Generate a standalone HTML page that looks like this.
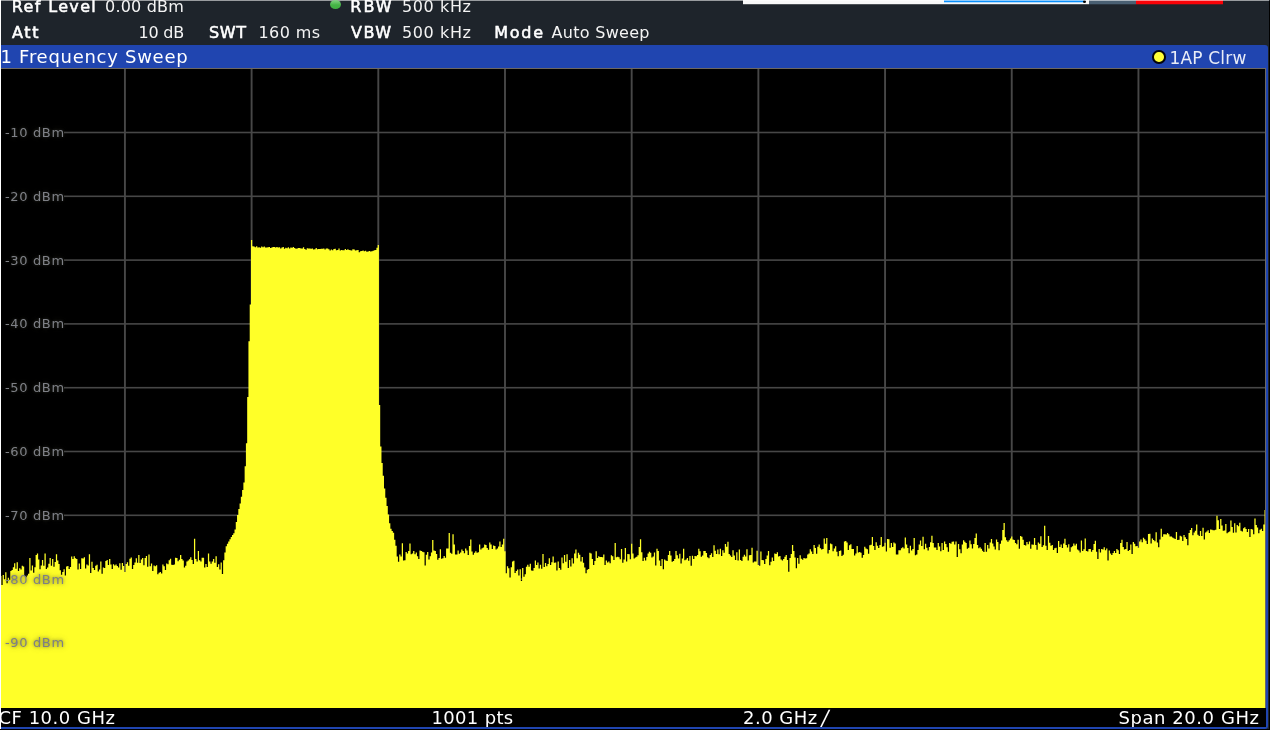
<!DOCTYPE html>
<html lang="en">
<head>
<meta charset="utf-8">
<title>Spectrum Analyzer - Frequency Sweep</title>
<style>
html,body{margin:0;padding:0;}
body{width:1272px;height:731px;overflow:hidden;position:relative;background:#1e242b;
 font-family:"DejaVu Sans","Liberation Sans",sans-serif;color:#fff;}
.abs{position:absolute;}
.ly{will-change:transform;}
.t{position:absolute;white-space:nowrap;line-height:20px;height:20px;font-size:16px;color:#f4f4f4;}
.b{font-weight:normal;color:#fff;-webkit-text-stroke:.55px #fff;}
.hdr{left:0;top:0;width:1272px;height:45px;background:#1e242b;overflow:hidden;}
.title{left:1px;top:45px;width:1267px;height:23px;background:#2045b0;border-top-right-radius:3px;}
.frame{left:1px;top:68px;width:1267px;height:661px;background:#2045b0;border-bottom-right-radius:3px;}
.plot{left:0;top:68px;width:1266px;height:640px;background:#000;overflow:hidden;}
.foot{left:1px;top:708px;width:1265px;height:19px;background:#000;overflow:hidden;}
.ft{position:absolute;top:0;white-space:nowrap;font-size:18px;line-height:19px;color:#fff;}
.yl{position:absolute;left:5px;font-size:13px;line-height:18px;height:18px;color:#7e8086;white-space:nowrap;
 letter-spacing:.65px;text-shadow:0 0 3px rgba(70,70,60,.55),0 0 6px rgba(70,70,60,.45);}
</style>
</head>
<body>
<!-- header / channel bar -->
<div class="abs hdr ly">
  <div class="abs" style="left:743px;top:0;width:346px;height:4px;background:#f8f8f8"></div>
  <div class="abs" style="left:743px;top:4px;width:346px;height:1px;background:#4d5257"></div>
  <div class="abs" style="left:944px;top:0;width:140px;height:2px;background:#0a8ffb"></div>
  <div class="abs" style="left:944px;top:2px;width:140px;height:1px;background:#b4dcfd"></div>
  <div class="abs" style="left:1083px;top:.4px;width:3px;height:3px;border-radius:50%;background:#000"></div>
  <div class="abs" style="left:1089px;top:0;width:47px;height:4px;background:#4a6073"></div>
  <div class="abs" style="left:1089px;top:4px;width:47px;height:1px;background:#2a3540"></div>
  <div class="abs" style="left:1136px;top:0;width:87px;height:4px;background:#fb0207"></div>
  <div class="abs" style="left:1136px;top:4px;width:87px;height:1px;background:#5a1c22"></div>
  <div class="abs" style="left:0;top:0;width:1269px;height:1px;background:rgba(255,255,255,.55)"></div>
  <div class="abs" style="left:330px;top:0;width:11px;height:9px;border-radius:50%;background:linear-gradient(#86d486,#45b446 55%,#3fae40)"></div>

  <div class="t b" id="t1" style="left:11.8px;top:-3.5px;letter-spacing:1.35px">Ref Level</div>
  <div class="t" id="t2" style="left:105px;top:-3.5px;letter-spacing:.2px">0.00 dBm</div>
  <div class="t b" id="t3" style="left:350.3px;top:-3.5px;letter-spacing:2px">RBW</div>
  <div class="t" id="t4" style="left:402px;top:-3.5px;letter-spacing:.6px">500 kHz</div>

  <div class="t b" id="t5" style="left:12px;top:23px;letter-spacing:1.65px">Att</div>
  <div class="t" id="t6" style="left:138.5px;top:23px;letter-spacing:-.2px">10 dB</div>
  <div class="t b" id="t7" style="left:209px;top:23px;letter-spacing:.65px">SWT</div>
  <div class="t" id="t8" style="left:258.5px;top:23px;letter-spacing:.4px">160 ms</div>
  <div class="t b" id="t9" style="left:351px;top:23px;letter-spacing:1.45px">VBW</div>
  <div class="t" id="t10" style="left:402px;top:23px;letter-spacing:.6px">500 kHz</div>
  <div class="t b" id="t11" style="left:494.3px;top:23px;letter-spacing:1.7px">Mode</div>
  <div class="t" id="t12" style="left:551.5px;top:23px;letter-spacing:.3px">Auto Sweep</div>
</div>

<!-- window title bar -->
<div class="abs title ly">
  <div class="t" id="tt" style="left:-.5px;top:1px;font-size:18px;line-height:22px;height:22px;color:#fff;letter-spacing:.72px">1 Frequency Sweep</div>
  <div class="abs" style="left:1151.4px;top:5.4px;width:9.6px;height:9.6px;border-radius:50%;background:#ffff38;border:2px solid #05050c"></div>
  <div class="t" id="tr" style="left:1168.5px;top:1.5px;font-size:17px;line-height:22px;height:22px;color:#e9edf7;letter-spacing:.18px">1AP Clrw</div>
</div>

<!-- diagram frame -->
<div class="abs frame"></div>
<div class="abs plot">
<svg class="abs" style="left:0;top:-68px" width="1266" height="731" viewBox="0 0 1266 731">
  <g fill="#474747"><rect x="123.97" y="68" width="1.9" height="640"/><rect x="250.66" y="68" width="1.9" height="640"/><rect x="377.35" y="68" width="1.9" height="640"/><rect x="504.04" y="68" width="1.9" height="640"/><rect x="630.73" y="68" width="1.9" height="640"/><rect x="757.42" y="68" width="1.9" height="640"/><rect x="884.11" y="68" width="1.9" height="640"/><rect x="1010.80" y="68" width="1.9" height="640"/><rect x="1137.49" y="68" width="1.9" height="640"/><rect x="64" y="131.70" width="1201" height="1.6"/><rect x="64" y="195.50" width="1201" height="1.6"/><rect x="64" y="259.30" width="1201" height="1.6"/><rect x="64" y="323.10" width="1201" height="1.6"/><rect x="64" y="386.90" width="1201" height="1.6"/><rect x="64" y="450.70" width="1201" height="1.6"/><rect x="64" y="514.50" width="1201" height="1.6"/><rect x="64" y="578.30" width="1201" height="1.6"/><rect x="64" y="642.10" width="1201" height="1.6"/></g>
  <path fill="#ffff28" d="M-1.8,708L-2.40,572.8L-1.14,572.8L-1.14,585.3L0.13,585.3L0.13,576.1L1.40,576.1L1.40,585.1L2.66,585.1L2.66,575.0L3.93,575.0L3.93,579.3L5.20,579.3L5.20,572.3L6.46,572.3L6.46,583.3L7.73,583.3L7.73,577.7L9.00,577.7L9.00,579.7L10.27,579.7L10.27,571.1L11.53,571.1L11.53,570.0L12.80,570.0L12.80,567.2L14.07,567.2L14.07,563.2L15.33,563.2L15.33,568.7L16.60,568.7L16.60,562.3L17.87,562.3L17.87,570.9L19.13,570.9L19.13,568.3L20.40,568.3L20.40,569.5L21.67,569.5L21.67,565.8L22.93,565.8L22.93,566.5L24.20,566.5L24.20,575.9L25.47,575.9L25.47,577.2L26.74,577.2L26.74,575.4L28.00,575.4L28.00,573.8L29.27,573.8L29.27,558.1L30.54,558.1L30.54,570.4L31.80,570.4L31.80,565.4L33.07,565.4L33.07,572.8L34.34,572.8L34.34,567.2L35.60,567.2L35.60,555.0L36.87,555.0L36.87,553.4L38.14,553.4L38.14,559.5L39.40,559.5L39.40,569.2L40.67,569.2L40.67,565.5L41.94,565.5L41.94,559.9L43.20,559.9L43.20,565.7L44.47,565.7L44.47,553.4L45.74,553.4L45.74,569.1L47.01,569.1L47.01,567.4L48.27,567.4L48.27,563.8L49.54,563.8L49.54,558.0L50.81,558.0L50.81,565.8L52.07,565.8L52.07,559.1L53.34,559.1L53.34,566.8L54.61,566.8L54.61,562.0L55.87,562.0L55.87,554.3L57.14,554.3L57.14,560.4L58.41,560.4L58.41,564.1L59.67,564.1L59.67,570.3L60.94,570.3L60.94,574.8L62.21,574.8L62.21,571.9L63.48,571.9L63.48,569.2L64.74,569.2L64.74,575.6L66.01,575.6L66.01,566.4L67.28,566.4L67.28,566.1L68.54,566.1L68.54,568.9L69.81,568.9L69.81,567.1L71.08,567.1L71.08,556.4L72.34,556.4L72.34,558.9L73.61,558.9L73.61,556.3L74.88,556.3L74.88,558.3L76.14,558.3L76.14,559.1L77.41,559.1L77.41,569.5L78.68,569.5L78.68,563.6L79.95,563.6L79.95,569.0L81.21,569.0L81.21,558.2L82.48,558.2L82.48,558.4L83.75,558.4L83.75,557.2L85.01,557.2L85.01,568.6L86.28,568.6L86.28,564.4L87.55,564.4L87.55,565.5L88.81,565.5L88.81,554.2L90.08,554.2L90.08,572.9L91.35,572.9L91.35,561.8L92.61,561.8L92.61,567.9L93.88,567.9L93.88,570.1L95.15,570.1L95.15,565.8L96.41,565.8L96.41,564.7L97.68,564.7L97.68,571.6L98.95,571.6L98.95,569.5L100.22,569.5L100.22,561.6L101.48,561.6L101.48,573.7L102.75,573.7L102.75,567.6L104.02,567.6L104.02,567.9L105.28,567.9L105.28,561.1L106.55,561.1L106.55,560.0L107.82,560.0L107.82,564.9L109.08,564.9L109.08,559.0L110.35,559.0L110.35,564.5L111.62,564.5L111.62,569.0L112.88,569.0L112.88,564.3L114.15,564.3L114.15,565.4L115.42,565.4L115.42,564.5L116.69,564.5L116.69,566.0L117.95,566.0L117.95,567.6L119.22,567.6L119.22,563.2L120.49,563.2L120.49,569.7L121.75,569.7L121.75,562.9L123.02,562.9L123.02,566.1L124.29,566.1L124.29,572.0L125.55,572.0L125.55,564.1L126.82,564.1L126.82,562.3L128.09,562.3L128.09,565.7L129.35,565.7L129.35,558.8L130.62,558.8L130.62,557.6L131.89,557.6L131.89,568.9L133.15,568.9L133.15,565.0L134.42,565.0L134.42,562.4L135.69,562.4L135.69,558.3L136.96,558.3L136.96,562.7L138.22,562.7L138.22,555.1L139.49,555.1L139.49,562.9L140.76,562.9L140.76,559.4L142.02,559.4L142.02,558.0L143.29,558.0L143.29,565.3L144.56,565.3L144.56,558.1L145.82,558.1L145.82,555.9L147.09,555.9L147.09,566.7L148.36,566.7L148.36,554.4L149.62,554.4L149.62,566.3L150.89,566.3L150.89,563.5L152.16,563.5L152.16,570.9L153.43,570.9L153.43,565.6L154.69,565.6L154.69,566.2L155.96,566.2L155.96,565.2L157.23,565.2L157.23,574.3L158.49,574.3L158.49,572.8L159.76,572.8L159.76,572.0L161.03,572.0L161.03,573.4L162.29,573.4L162.29,564.5L163.56,564.5L163.56,566.3L164.83,566.3L164.83,569.9L166.09,569.9L166.09,563.6L167.36,563.6L167.36,564.2L168.63,564.2L168.63,560.2L169.89,560.2L169.89,558.7L171.16,558.7L171.16,564.8L172.43,564.8L172.43,564.9L173.70,564.9L173.70,564.4L174.96,564.4L174.96,557.7L176.23,557.7L176.23,558.0L177.50,558.0L177.50,561.3L178.76,561.3L178.76,559.7L180.03,559.7L180.03,555.0L181.30,555.0L181.30,559.1L182.56,559.1L182.56,560.5L183.83,560.5L183.83,567.6L185.10,567.6L185.10,565.8L186.36,565.8L186.36,561.4L187.63,561.4L187.63,560.4L188.90,560.4L188.90,559.2L190.17,559.2L190.17,557.3L191.43,557.3L191.43,560.1L192.70,560.1L192.70,564.0L193.97,564.0L193.97,538.8L195.23,538.8L195.23,558.9L196.50,558.9L196.50,561.5L197.77,561.5L197.77,550.9L199.03,550.9L199.03,560.3L200.30,560.3L200.30,561.6L201.57,561.6L201.57,557.8L202.83,557.8L202.83,557.8L204.10,557.8L204.10,567.4L205.37,567.4L205.37,564.1L206.64,564.1L206.64,567.1L207.90,567.1L207.90,553.5L209.17,553.5L209.17,561.4L210.44,561.4L210.44,563.8L211.70,563.8L211.70,561.4L212.97,561.4L212.97,559.0L214.24,559.0L214.24,562.7L215.50,562.7L215.50,556.2L216.77,556.2L216.77,567.0L218.04,567.0L218.04,564.3L219.30,564.3L219.30,569.4L220.57,569.4L220.57,562.4L221.84,562.4L221.84,573.9L223.10,573.9L223.10,560.3L224.37,560.3L224.37,552.5L225.64,552.5L225.64,546.3L226.91,546.3L226.91,543.8L228.17,543.8L228.17,541.4L229.44,541.4L229.44,539.2L230.71,539.2L230.71,537.1L231.97,537.1L231.97,535.1L233.24,535.1L233.24,533.2L234.51,533.2L234.51,529.4L235.77,529.4L235.77,521.9L237.04,521.9L237.04,514.9L238.31,514.9L238.31,509.1L239.57,509.1L239.57,503.4L240.84,503.4L240.84,496.7L242.11,496.7L242.11,490.0L243.38,490.0L243.38,482.4L244.64,482.4L244.64,466.2L245.91,466.2L245.91,443.2L247.18,443.2L247.18,397.1L248.44,397.1L248.44,341.2L249.71,341.2L249.71,304.6L250.98,304.6L250.98,240.0L252.24,240.0L252.24,246.3L253.51,246.3L253.51,246.4L254.78,246.4L254.78,247.2L256.04,247.2L256.04,246.2L257.31,246.2L257.31,247.6L258.58,247.6L258.58,247.2L259.84,247.2L259.84,247.7L261.11,247.7L261.11,246.6L262.38,246.6L262.38,247.3L263.65,247.3L263.65,246.6L264.91,246.6L264.91,247.6L266.18,247.6L266.18,247.5L267.45,247.5L267.45,247.3L268.71,247.3L268.71,246.9L269.98,246.9L269.98,248.1L271.25,248.1L271.25,247.6L272.51,247.6L272.51,247.1L273.78,247.1L273.78,247.1L275.05,247.1L275.05,247.6L276.31,247.6L276.31,247.0L277.58,247.0L277.58,247.4L278.85,247.4L278.85,247.2L280.12,247.2L280.12,248.5L281.38,248.5L281.38,247.5L282.65,247.5L282.65,247.1L283.92,247.1L283.92,248.7L285.18,248.7L285.18,247.7L286.45,247.7L286.45,248.2L287.72,248.2L287.72,247.3L288.98,247.3L288.98,248.6L290.25,248.6L290.25,247.4L291.52,247.4L291.52,247.8L292.78,247.8L292.78,247.1L294.05,247.1L294.05,248.1L295.32,248.1L295.32,248.8L296.58,248.8L296.58,248.6L297.85,248.6L297.85,248.1L299.12,248.1L299.12,248.0L300.39,248.0L300.39,248.4L301.65,248.4L301.65,248.5L302.92,248.5L302.92,247.2L304.19,247.2L304.19,248.9L305.45,248.9L305.45,249.8L306.72,249.8L306.72,248.2L307.99,248.2L307.99,248.6L309.25,248.6L309.25,248.4L310.52,248.4L310.52,248.8L311.79,248.8L311.79,248.6L313.05,248.6L313.05,249.5L314.32,249.5L314.32,249.2L315.59,249.2L315.59,248.1L316.86,248.1L316.86,249.2L318.12,249.2L318.12,248.9L319.39,248.9L319.39,248.9L320.66,248.9L320.66,248.8L321.92,248.8L321.92,248.7L323.19,248.7L323.19,248.4L324.46,248.4L324.46,249.6L325.72,249.6L325.72,248.6L326.99,248.6L326.99,248.4L328.26,248.4L328.26,249.3L329.52,249.3L329.52,250.6L330.79,250.6L330.79,249.5L332.06,249.5L332.06,250.3L333.33,250.3L333.33,249.1L334.59,249.1L334.59,248.7L335.86,248.7L335.86,250.2L337.13,250.2L337.13,249.9L338.39,249.9L338.39,248.6L339.66,248.6L339.66,250.5L340.93,250.5L340.93,250.1L342.19,250.1L342.19,250.2L343.46,250.2L343.46,250.2L344.73,250.2L344.73,248.9L345.99,248.9L345.99,249.9L347.26,249.9L347.26,249.3L348.53,249.3L348.53,250.1L349.79,250.1L349.79,250.2L351.06,250.2L351.06,250.5L352.33,250.5L352.33,249.2L353.60,249.2L353.60,249.6L354.86,249.6L354.86,250.5L356.13,250.5L356.13,250.2L357.40,250.2L357.40,249.9L358.66,249.9L358.66,252.3L359.93,252.3L359.93,251.2L361.20,251.2L361.20,251.1L362.46,251.1L362.46,250.6L363.73,250.6L363.73,251.2L365.00,251.2L365.00,250.8L366.26,250.8L366.26,251.8L367.53,251.8L367.53,251.4L368.80,251.4L368.80,251.1L370.07,251.1L370.07,251.4L371.33,251.4L371.33,251.2L372.60,251.2L372.60,250.8L373.87,250.8L373.87,250.3L375.13,250.3L375.13,249.9L376.40,249.9L376.40,247.7L377.67,247.7L377.67,245.0L378.93,245.0L378.93,405.0L380.20,405.0L380.20,446.6L381.47,446.6L381.47,463.0L382.73,463.0L382.73,475.7L384.00,475.7L384.00,488.6L385.27,488.6L385.27,497.7L386.53,497.7L386.53,506.1L387.80,506.1L387.80,514.5L389.07,514.5L389.07,523.3L390.34,523.3L390.34,528.7L391.60,528.7L391.60,530.9L392.87,530.9L392.87,532.8L394.14,532.8L394.14,539.7L395.40,539.7L395.40,545.8L396.67,545.8L396.67,556.4L397.94,556.4L397.94,561.8L399.20,561.8L399.20,554.4L400.47,554.4L400.47,556.5L401.74,556.5L401.74,543.2L403.00,543.2L403.00,560.5L404.27,560.5L404.27,560.2L405.54,560.2L405.54,552.0L406.81,552.0L406.81,553.4L408.07,553.4L408.07,551.1L409.34,551.1L409.34,543.4L410.61,543.4L410.61,554.3L411.87,554.3L411.87,553.6L413.14,553.6L413.14,551.1L414.41,551.1L414.41,554.3L415.67,554.3L415.67,552.4L416.94,552.4L416.94,556.3L418.21,556.3L418.21,559.0L419.47,559.0L419.47,550.4L420.74,550.4L420.74,551.1L422.01,551.1L422.01,551.8L423.27,551.8L423.27,552.3L424.54,552.3L424.54,565.5L425.81,565.5L425.81,554.7L427.08,554.7L427.08,552.0L428.34,552.0L428.34,559.4L429.61,559.4L429.61,556.3L430.88,556.3L430.88,552.5L432.14,552.5L432.14,540.1L433.41,540.1L433.41,550.4L434.68,550.4L434.68,551.0L435.94,551.0L435.94,554.0L437.21,554.0L437.21,559.7L438.48,559.7L438.48,557.9L439.74,557.9L439.74,549.2L441.01,549.2L441.01,558.8L442.28,558.8L442.28,558.3L443.55,558.3L443.55,556.1L444.81,556.1L444.81,557.7L446.08,557.7L446.08,548.6L447.35,548.6L447.35,548.4L448.61,548.4L448.61,533.0L449.88,533.0L449.88,552.7L451.15,552.7L451.15,553.8L452.41,553.8L452.41,534.3L453.68,534.3L453.68,544.6L454.95,544.6L454.95,554.5L456.21,554.5L456.21,554.4L457.48,554.4L457.48,550.4L458.75,550.4L458.75,553.7L460.02,553.7L460.02,552.5L461.28,552.5L461.28,549.6L462.55,549.6L462.55,550.9L463.82,550.9L463.82,553.2L465.08,553.2L465.08,548.5L466.35,548.5L466.35,550.5L467.62,550.5L467.62,555.0L468.88,555.0L468.88,546.1L470.15,546.1L470.15,539.4L471.42,539.4L471.42,551.4L472.68,551.4L472.68,554.7L473.95,554.7L473.95,552.8L475.22,552.8L475.22,551.2L476.48,551.2L476.48,552.7L477.75,552.7L477.75,552.3L479.02,552.3L479.02,544.5L480.29,544.5L480.29,549.6L481.55,549.6L481.55,548.3L482.82,548.3L482.82,547.6L484.09,547.6L484.09,544.6L485.35,544.6L485.35,544.9L486.62,544.9L486.62,548.1L487.89,548.1L487.89,549.7L489.15,549.7L489.15,542.6L490.42,542.6L490.42,544.6L491.69,544.6L491.69,548.9L492.95,548.9L492.95,545.6L494.22,545.6L494.22,545.9L495.49,545.9L495.49,549.5L496.76,549.5L496.76,548.5L498.02,548.5L498.02,546.5L499.29,546.5L499.29,541.4L500.56,541.4L500.56,546.9L501.82,546.9L501.82,544.6L503.09,544.6L503.09,538.7L504.36,538.7L504.36,551.3L505.62,551.3L505.62,573.2L506.89,573.2L506.89,566.3L508.16,566.3L508.16,568.3L509.42,568.3L509.42,577.6L510.69,577.6L510.69,567.3L511.96,567.3L511.96,561.5L513.22,561.5L513.22,560.8L514.49,560.8L514.49,573.1L515.76,573.1L515.76,571.1L517.03,571.1L517.03,569.5L518.29,569.5L518.29,575.5L519.56,575.5L519.56,569.3L520.83,569.3L520.83,581.1L522.09,581.1L522.09,567.9L523.36,567.9L523.36,576.7L524.63,576.7L524.63,574.3L525.89,574.3L525.89,566.8L527.16,566.8L527.16,564.8L528.43,564.8L528.43,566.7L529.69,566.7L529.69,563.8L530.96,563.8L530.96,570.5L532.23,570.5L532.23,570.7L533.50,570.7L533.50,568.0L534.76,568.0L534.76,560.5L536.03,560.5L536.03,565.1L537.30,565.1L537.30,562.5L538.56,562.5L538.56,568.6L539.83,568.6L539.83,564.7L541.10,564.7L541.10,568.7L542.36,568.7L542.36,554.0L543.63,554.0L543.63,566.9L544.90,566.9L544.90,563.0L546.16,563.0L546.16,566.2L547.43,566.2L547.43,563.9L548.70,563.9L548.70,558.3L549.96,558.3L549.96,565.0L551.23,565.0L551.23,562.2L552.50,562.2L552.50,556.4L553.77,556.4L553.77,562.7L555.03,562.7L555.03,562.6L556.30,562.6L556.30,570.4L557.57,570.4L557.57,561.6L558.83,561.6L558.83,568.1L560.10,568.1L560.10,569.8L561.37,569.8L561.37,557.5L562.63,557.5L562.63,563.3L563.90,563.3L563.90,554.9L565.17,554.9L565.17,561.8L566.43,561.8L566.43,554.2L567.70,554.2L567.70,568.0L568.97,568.0L568.97,559.9L570.24,559.9L570.24,566.5L571.50,566.5L571.50,558.3L572.77,558.3L572.77,563.5L574.04,563.5L574.04,553.6L575.30,553.6L575.30,549.6L576.57,549.6L576.57,558.3L577.84,558.3L577.84,552.7L579.10,552.7L579.10,554.8L580.37,554.8L580.37,561.4L581.64,561.4L581.64,557.0L582.90,557.0L582.90,562.7L584.17,562.7L584.17,567.4L585.44,567.4L585.44,573.3L586.71,573.3L586.71,569.7L587.97,569.7L587.97,569.0L589.24,569.0L589.24,552.7L590.51,552.7L590.51,553.4L591.77,553.4L591.77,559.0L593.04,559.0L593.04,565.0L594.31,565.0L594.31,561.0L595.57,561.0L595.57,551.3L596.84,551.3L596.84,557.9L598.11,557.9L598.11,556.2L599.37,556.2L599.37,557.0L600.64,557.0L600.64,557.1L601.91,557.1L601.91,557.3L603.17,557.3L603.17,554.6L604.44,554.6L604.44,565.0L605.71,565.0L605.71,560.5L606.98,560.5L606.98,562.5L608.24,562.5L608.24,561.4L609.51,561.4L609.51,563.2L610.78,563.2L610.78,555.2L612.04,555.2L612.04,556.3L613.31,556.3L613.31,560.0L614.58,560.0L614.58,543.1L615.84,543.1L615.84,557.2L617.11,557.2L617.11,556.8L618.38,556.8L618.38,557.3L619.64,557.3L619.64,559.2L620.91,559.2L620.91,549.0L622.18,549.0L622.18,562.8L623.45,562.8L623.45,559.4L624.71,559.4L624.71,547.9L625.98,547.9L625.98,561.6L627.25,561.6L627.25,553.9L628.51,553.9L628.51,554.2L629.78,554.2L629.78,559.3L631.05,559.3L631.05,543.7L632.31,543.7L632.31,553.5L633.58,553.5L633.58,558.4L634.85,558.4L634.85,557.6L636.11,557.6L636.11,556.8L637.38,556.8L637.38,555.3L638.65,555.3L638.65,547.1L639.91,547.1L639.91,539.2L641.18,539.2L641.18,552.3L642.45,552.3L642.45,561.0L643.72,561.0L643.72,557.7L644.98,557.7L644.98,560.5L646.25,560.5L646.25,557.0L647.52,557.0L647.52,553.6L648.78,553.6L648.78,551.7L650.05,551.7L650.05,552.7L651.32,552.7L651.32,557.5L652.58,557.5L652.58,556.6L653.85,556.6L653.85,552.6L655.12,552.6L655.12,565.5L656.38,565.5L656.38,548.8L657.65,548.8L657.65,551.0L658.92,551.0L658.92,560.5L660.19,560.5L660.19,566.1L661.45,566.1L661.45,558.9L662.72,558.9L662.72,569.2L663.99,569.2L663.99,559.4L665.25,559.4L665.25,560.4L666.52,560.4L666.52,561.0L667.79,561.0L667.79,555.1L669.05,555.1L669.05,550.9L670.32,550.9L670.32,555.5L671.59,555.5L671.59,561.8L672.85,561.8L672.85,561.1L674.12,561.1L674.12,558.9L675.39,558.9L675.39,551.0L676.65,551.0L676.65,555.2L677.92,555.2L677.92,558.5L679.19,558.5L679.19,553.8L680.46,553.8L680.46,563.5L681.72,563.5L681.72,558.6L682.99,558.6L682.99,548.7L684.26,548.7L684.26,560.2L685.52,560.2L685.52,559.4L686.79,559.4L686.79,557.9L688.06,557.9L688.06,560.7L689.32,560.7L689.32,556.1L690.59,556.1L690.59,565.7L691.86,565.7L691.86,555.7L693.12,555.7L693.12,559.1L694.39,559.1L694.39,556.1L695.66,556.1L695.66,556.3L696.93,556.3L696.93,555.0L698.19,555.0L698.19,548.8L699.46,548.8L699.46,551.3L700.73,551.3L700.73,556.8L701.99,556.8L701.99,555.4L703.26,555.4L703.26,551.1L704.53,551.1L704.53,551.1L705.79,551.1L705.79,553.0L707.06,553.0L707.06,557.2L708.33,557.2L708.33,558.2L709.59,558.2L709.59,555.1L710.86,555.1L710.86,553.2L712.13,553.2L712.13,556.9L713.40,556.9L713.40,545.3L714.66,545.3L714.66,550.8L715.93,550.8L715.93,554.1L717.20,554.1L717.20,549.6L718.46,549.6L718.46,554.3L719.73,554.3L719.73,548.7L721.00,548.7L721.00,556.1L722.26,556.1L722.26,550.3L723.53,550.3L723.53,552.8L724.80,552.8L724.80,544.0L726.06,544.0L726.06,546.8L727.33,546.8L727.33,541.8L728.60,541.8L728.60,553.9L729.86,553.9L729.86,555.4L731.13,555.4L731.13,556.9L732.40,556.9L732.40,550.2L733.67,550.2L733.67,555.4L734.93,555.4L734.93,560.0L736.20,560.0L736.20,552.2L737.47,552.2L737.47,560.6L738.73,560.6L738.73,549.5L740.00,549.5L740.00,559.9L741.27,559.9L741.27,560.9L742.53,560.9L742.53,556.8L743.80,556.8L743.80,554.8L745.07,554.8L745.07,556.5L746.33,556.5L746.33,549.2L747.60,549.2L747.60,560.4L748.87,560.4L748.87,555.2L750.14,555.2L750.14,555.1L751.40,555.1L751.40,547.7L752.67,547.7L752.67,562.6L753.94,562.6L753.94,561.4L755.20,561.4L755.20,561.4L756.47,561.4L756.47,550.7L757.74,550.7L757.74,564.9L759.00,564.9L759.00,565.7L760.27,565.7L760.27,551.5L761.54,551.5L761.54,560.0L762.80,560.0L762.80,560.3L764.07,560.3L764.07,563.9L765.34,563.9L765.34,559.0L766.60,559.0L766.60,555.5L767.87,555.5L767.87,551.1L769.14,551.1L769.14,565.2L770.41,565.2L770.41,561.7L771.67,561.7L771.67,557.6L772.94,557.6L772.94,561.1L774.21,561.1L774.21,553.5L775.47,553.5L775.47,554.0L776.74,554.0L776.74,552.2L778.01,552.2L778.01,556.5L779.27,556.5L779.27,555.9L780.54,555.9L780.54,559.5L781.81,559.5L781.81,560.5L783.07,560.5L783.07,559.0L784.34,559.0L784.34,556.7L785.61,556.7L785.61,554.9L786.88,554.9L786.88,559.9L788.14,559.9L788.14,571.8L789.41,571.8L789.41,558.1L790.68,558.1L790.68,554.1L791.94,554.1L791.94,545.0L793.21,545.0L793.21,551.0L794.48,551.0L794.48,557.6L795.74,557.6L795.74,568.3L797.01,568.3L797.01,558.1L798.28,558.1L798.28,563.7L799.54,563.7L799.54,555.3L800.81,555.3L800.81,558.8L802.08,558.8L802.08,559.7L803.34,559.7L803.34,558.0L804.61,558.0L804.61,558.5L805.88,558.5L805.88,558.3L807.15,558.3L807.15,554.4L808.41,554.4L808.41,553.4L809.68,553.4L809.68,549.3L810.95,549.3L810.95,551.5L812.21,551.5L812.21,553.9L813.48,553.9L813.48,544.9L814.75,544.9L814.75,548.1L816.01,548.1L816.01,553.7L817.28,553.7L817.28,546.7L818.55,546.7L818.55,544.4L819.81,544.4L819.81,548.2L821.08,548.2L821.08,549.6L822.35,549.6L822.35,548.9L823.62,548.9L823.62,538.4L824.88,538.4L824.88,543.8L826.15,543.8L826.15,537.9L827.42,537.9L827.42,553.4L828.68,553.4L828.68,549.9L829.95,549.9L829.95,543.5L831.22,543.5L831.22,544.2L832.48,544.2L832.48,551.3L833.75,551.3L833.75,548.5L835.02,548.5L835.02,546.2L836.28,546.2L836.28,551.8L837.55,551.8L837.55,556.2L838.82,556.2L838.82,551.0L840.09,551.0L840.09,550.6L841.35,550.6L841.35,556.0L842.62,556.0L842.62,554.8L843.89,554.8L843.89,541.4L845.15,541.4L845.15,541.0L846.42,541.0L846.42,542.4L847.69,542.4L847.69,550.1L848.95,550.1L848.95,545.3L850.22,545.3L850.22,544.2L851.49,544.2L851.49,549.1L852.75,549.1L852.75,549.1L854.02,549.1L854.02,555.5L855.29,555.5L855.29,553.4L856.55,553.4L856.55,546.1L857.82,546.1L857.82,552.5L859.09,552.5L859.09,552.0L860.36,552.0L860.36,552.8L861.62,552.8L861.62,557.8L862.89,557.8L862.89,555.0L864.16,555.0L864.16,546.7L865.42,546.7L865.42,548.5L866.69,548.5L866.69,549.2L867.96,549.2L867.96,553.7L869.22,553.7L869.22,545.3L870.49,545.3L870.49,544.7L871.76,544.7L871.76,537.0L873.02,537.0L873.02,546.0L874.29,546.0L874.29,550.1L875.56,550.1L875.56,542.3L876.83,542.3L876.83,545.7L878.09,545.7L878.09,547.9L879.36,547.9L879.36,544.9L880.63,544.9L880.63,537.0L881.89,537.0L881.89,546.8L883.16,546.8L883.16,546.2L884.43,546.2L884.43,542.7L885.69,542.7L885.69,551.4L886.96,551.4L886.96,538.9L888.23,538.9L888.23,539.3L889.49,539.3L889.49,547.7L890.76,547.7L890.76,543.0L892.03,543.0L892.03,547.1L893.29,547.1L893.29,542.5L894.56,542.5L894.56,543.4L895.83,543.4L895.83,554.5L897.10,554.5L897.10,554.6L898.36,554.6L898.36,550.3L899.63,550.3L899.63,550.2L900.90,550.2L900.90,548.2L902.16,548.2L902.16,547.2L903.43,547.2L903.43,548.6L904.70,548.6L904.70,537.5L905.96,537.5L905.96,544.4L907.23,544.4L907.23,548.1L908.50,548.1L908.50,553.2L909.76,553.2L909.76,545.7L911.03,545.7L911.03,550.5L912.30,550.5L912.30,549.0L913.57,549.0L913.57,538.0L914.83,538.0L914.83,555.2L916.10,555.2L916.10,554.5L917.37,554.5L917.37,550.0L918.63,550.0L918.63,544.4L919.90,544.4L919.90,540.6L921.17,540.6L921.17,545.9L922.43,545.9L922.43,536.8L923.70,536.8L923.70,549.2L924.97,549.2L924.97,543.7L926.23,543.7L926.23,547.7L927.50,547.7L927.50,550.4L928.77,550.4L928.77,547.0L930.03,547.0L930.03,542.3L931.30,542.3L931.30,535.7L932.57,535.7L932.57,543.1L933.84,543.1L933.84,547.6L935.10,547.6L935.10,547.4L936.37,547.4L936.37,549.9L937.64,549.9L937.64,542.9L938.90,542.9L938.90,546.6L940.17,546.6L940.17,551.3L941.44,551.3L941.44,542.9L942.70,542.9L942.70,550.1L943.97,550.1L943.97,541.4L945.24,541.4L945.24,543.9L946.50,543.9L946.50,547.3L947.77,547.3L947.77,551.7L949.04,551.7L949.04,543.1L950.31,543.1L950.31,543.7L951.57,543.7L951.57,541.7L952.84,541.7L952.84,541.5L954.11,541.5L954.11,544.6L955.37,544.6L955.37,541.4L956.64,541.4L956.64,557.0L957.91,557.0L957.91,544.0L959.17,544.0L959.17,549.3L960.44,549.3L960.44,553.2L961.71,553.2L961.71,544.4L962.97,544.4L962.97,540.2L964.24,540.2L964.24,541.8L965.51,541.8L965.51,543.0L966.78,543.0L966.78,548.7L968.04,548.7L968.04,547.8L969.31,547.8L969.31,540.6L970.58,540.6L970.58,544.2L971.84,544.2L971.84,548.6L973.11,548.6L973.11,544.1L974.38,544.1L974.38,537.9L975.64,537.9L975.64,533.6L976.91,533.6L976.91,545.0L978.18,545.0L978.18,548.3L979.44,548.3L979.44,547.3L980.71,547.3L980.71,548.7L981.98,548.7L981.98,550.8L983.24,550.8L983.24,552.1L984.51,552.1L984.51,542.9L985.78,542.9L985.78,551.7L987.05,551.7L987.05,545.0L988.31,545.0L988.31,548.4L989.58,548.4L989.58,542.4L990.85,542.4L990.85,539.1L992.11,539.1L992.11,543.6L993.38,543.6L993.38,546.5L994.65,546.5L994.65,549.5L995.91,549.5L995.91,539.6L997.18,539.6L997.18,541.9L998.45,541.9L998.45,550.3L999.71,550.3L999.71,543.7L1000.98,543.7L1000.98,540.6L1002.25,540.6L1002.25,530.0L1003.52,530.0L1003.52,522.9L1004.78,522.9L1004.78,537.3L1006.05,537.3L1006.05,540.2L1007.32,540.2L1007.32,541.7L1008.58,541.7L1008.58,540.2L1009.85,540.2L1009.85,538.5L1011.12,538.5L1011.12,536.6L1012.38,536.6L1012.38,539.6L1013.65,539.6L1013.65,540.0L1014.92,540.0L1014.92,543.1L1016.18,543.1L1016.18,544.2L1017.45,544.2L1017.45,539.8L1018.72,539.8L1018.72,548.8L1019.98,548.8L1019.98,535.9L1021.25,535.9L1021.25,536.7L1022.52,536.7L1022.52,539.7L1023.79,539.7L1023.79,545.1L1025.05,545.1L1025.05,545.6L1026.32,545.6L1026.32,542.1L1027.59,542.1L1027.59,544.3L1028.85,544.3L1028.85,541.6L1030.12,541.6L1030.12,548.8L1031.39,548.8L1031.39,544.6L1032.65,544.6L1032.65,544.8L1033.92,544.8L1033.92,537.9L1035.19,537.9L1035.19,545.1L1036.45,545.1L1036.45,549.7L1037.72,549.7L1037.72,542.4L1038.99,542.4L1038.99,543.8L1040.26,543.8L1040.26,536.3L1041.52,536.3L1041.52,546.9L1042.79,546.9L1042.79,545.3L1044.06,545.3L1044.06,525.7L1045.32,525.7L1045.32,545.8L1046.59,545.8L1046.59,550.0L1047.86,550.0L1047.86,535.9L1049.12,535.9L1049.12,542.7L1050.39,542.7L1050.39,545.7L1051.66,545.7L1051.66,545.0L1052.92,545.0L1052.92,550.1L1054.19,550.1L1054.19,548.2L1055.46,548.2L1055.46,547.8L1056.72,547.8L1056.72,553.1L1057.99,553.1L1057.99,540.9L1059.26,540.9L1059.26,547.1L1060.53,547.1L1060.53,544.5L1061.79,544.5L1061.79,548.1L1063.06,548.1L1063.06,543.5L1064.33,543.5L1064.33,538.7L1065.59,538.7L1065.59,545.1L1066.86,545.1L1066.86,547.4L1068.13,547.4L1068.13,544.3L1069.39,544.3L1069.39,551.7L1070.66,551.7L1070.66,547.3L1071.93,547.3L1071.93,546.3L1073.19,546.3L1073.19,543.4L1074.46,543.4L1074.46,545.6L1075.73,545.6L1075.73,543.7L1077.00,543.7L1077.00,549.4L1078.26,549.4L1078.26,550.5L1079.53,550.5L1079.53,552.6L1080.80,552.6L1080.80,540.5L1082.06,540.5L1082.06,550.9L1083.33,550.9L1083.33,549.3L1084.60,549.3L1084.60,538.5L1085.86,538.5L1085.86,551.0L1087.13,551.0L1087.13,551.4L1088.40,551.4L1088.40,549.1L1089.66,549.1L1089.66,549.1L1090.93,549.1L1090.93,551.8L1092.20,551.8L1092.20,549.9L1093.47,549.9L1093.47,544.1L1094.73,544.1L1094.73,540.8L1096.00,540.8L1096.00,551.7L1097.27,551.7L1097.27,559.0L1098.53,559.0L1098.53,549.1L1099.80,549.1L1099.80,552.6L1101.07,552.6L1101.07,549.0L1102.33,549.0L1102.33,549.5L1103.60,549.5L1103.60,547.3L1104.87,547.3L1104.87,550.2L1106.13,550.2L1106.13,548.5L1107.40,548.5L1107.40,560.5L1108.67,560.5L1108.67,550.6L1109.93,550.6L1109.93,553.4L1111.20,553.4L1111.20,554.9L1112.47,554.9L1112.47,552.9L1113.74,552.9L1113.74,551.0L1115.00,551.0L1115.00,553.0L1116.27,553.0L1116.27,549.1L1117.54,549.1L1117.54,550.3L1118.80,550.3L1118.80,553.9L1120.07,553.9L1120.07,543.1L1121.34,543.1L1121.34,539.8L1122.60,539.8L1122.60,547.0L1123.87,547.0L1123.87,549.4L1125.14,549.4L1125.14,549.1L1126.40,549.1L1126.40,541.9L1127.67,541.9L1127.67,551.1L1128.94,551.1L1128.94,550.0L1130.21,550.0L1130.21,544.6L1131.47,544.6L1131.47,553.9L1132.74,553.9L1132.74,542.1L1134.01,542.1L1134.01,543.7L1135.27,543.7L1135.27,546.2L1136.54,546.2L1136.54,546.1L1137.81,546.1L1137.81,547.7L1139.07,547.7L1139.07,541.6L1140.34,541.6L1140.34,539.5L1141.61,539.5L1141.61,542.3L1142.87,542.3L1142.87,537.7L1144.14,537.7L1144.14,539.2L1145.41,539.2L1145.41,540.8L1146.67,540.8L1146.67,544.1L1147.94,544.1L1147.94,534.0L1149.21,534.0L1149.21,533.8L1150.48,533.8L1150.48,543.6L1151.74,543.6L1151.74,538.5L1153.01,538.5L1153.01,539.9L1154.28,539.9L1154.28,541.3L1155.54,541.3L1155.54,532.3L1156.81,532.3L1156.81,542.6L1158.08,542.6L1158.08,547.2L1159.34,547.2L1159.34,539.6L1160.61,539.6L1160.61,528.8L1161.88,528.8L1161.88,536.8L1163.14,536.8L1163.14,534.3L1164.41,534.3L1164.41,534.3L1165.68,534.3L1165.68,534.6L1166.95,534.6L1166.95,533.0L1168.21,533.0L1168.21,534.3L1169.48,534.3L1169.48,536.4L1170.75,536.4L1170.75,536.4L1172.01,536.4L1172.01,537.6L1173.28,537.6L1173.28,538.3L1174.55,538.3L1174.55,539.1L1175.81,539.1L1175.81,532.0L1177.08,532.0L1177.08,540.1L1178.35,540.1L1178.35,539.8L1179.61,539.8L1179.61,535.7L1180.88,535.7L1180.88,536.4L1182.15,536.4L1182.15,541.1L1183.41,541.1L1183.41,535.0L1184.68,535.0L1184.68,537.3L1185.95,537.3L1185.95,539.1L1187.22,539.1L1187.22,545.2L1188.48,545.2L1188.48,532.9L1189.75,532.9L1189.75,529.9L1191.02,529.9L1191.02,528.1L1192.28,528.1L1192.28,535.2L1193.55,535.2L1193.55,532.6L1194.82,532.6L1194.82,530.7L1196.08,530.7L1196.08,524.4L1197.35,524.4L1197.35,534.8L1198.62,534.8L1198.62,536.0L1199.88,536.0L1199.88,531.0L1201.15,531.0L1201.15,536.0L1202.42,536.0L1202.42,527.7L1203.69,527.7L1203.69,539.5L1204.95,539.5L1204.95,532.6L1206.22,532.6L1206.22,531.4L1207.49,531.4L1207.49,530.2L1208.75,530.2L1208.75,533.1L1210.02,533.1L1210.02,529.6L1211.29,529.6L1211.29,529.7L1212.55,529.7L1212.55,530.2L1213.82,530.2L1213.82,530.3L1215.09,530.3L1215.09,529.7L1216.35,529.7L1216.35,515.7L1217.62,515.7L1217.62,520.3L1218.89,520.3L1218.89,529.1L1220.16,529.1L1220.16,519.1L1221.42,519.1L1221.42,525.6L1222.69,525.6L1222.69,530.8L1223.96,530.8L1223.96,530.6L1225.22,530.6L1225.22,523.9L1226.49,523.9L1226.49,533.2L1227.76,533.2L1227.76,532.2L1229.02,532.2L1229.02,531.6L1230.29,531.6L1230.29,520.5L1231.56,520.5L1231.56,526.9L1232.82,526.9L1232.82,532.7L1234.09,532.7L1234.09,523.2L1235.36,523.2L1235.36,532.6L1236.62,532.6L1236.62,524.9L1237.89,524.9L1237.89,526.3L1239.16,526.3L1239.16,522.8L1240.43,522.8L1240.43,530.8L1241.69,530.8L1241.69,531.4L1242.96,531.4L1242.96,528.2L1244.23,528.2L1244.23,527.2L1245.49,527.2L1245.49,528.9L1246.76,528.9L1246.76,532.1L1248.03,532.1L1248.03,529.0L1249.29,529.0L1249.29,537.0L1250.56,537.0L1250.56,528.9L1251.83,528.9L1251.83,529.5L1253.09,529.5L1253.09,534.2L1254.36,534.2L1254.36,518.4L1255.63,518.4L1255.63,524.9L1256.90,524.9L1256.90,527.5L1258.16,527.5L1258.16,533.3L1259.43,533.3L1259.43,529.8L1260.70,529.8L1260.70,528.8L1261.96,528.8L1261.96,530.9L1263.23,530.9L1263.23,524.5L1264.50,524.5L1264.50,510.0L1265.76,510.0L1266.1,708Z"/>
  <rect x="0" y="68" width="1266" height="1" fill="#6c6862"/>
  <rect x="1265" y="68" width="1" height="640" fill="#6c6862"/>
</svg>
</div>
<div class="abs ly" style="left:0;top:0;width:1272px;height:731px;pointer-events:none">
<div class="yl" style="top:123.9px">-10 dBm</div>
<div class="yl" style="top:187.7px">-20 dBm</div>
<div class="yl" style="top:251.5px">-30 dBm</div>
<div class="yl" style="top:315.3px">-40 dBm</div>
<div class="yl" style="top:379.1px">-50 dBm</div>
<div class="yl" style="top:442.9px">-60 dBm</div>
<div class="yl" style="top:506.7px">-70 dBm</div>
<div class="yl" style="top:570.5px">-80 dBm</div>
<div class="yl" style="top:634.3px">-90 dBm</div>
</div>

<!-- footer -->
<div class="abs foot ly">
  <div class="ft" id="f1" style="left:-2.5px;letter-spacing:.5px">CF 10.0 GHz</div>
  <div class="ft" id="f2" style="left:430.5px;letter-spacing:.32px">1001 pts</div>
  <div class="ft" id="f3" style="left:742px;letter-spacing:.5px">2.0 GHz<span style="display:inline-block;transform-origin:0 70%;transform:translate(3px,.5px) skewX(-11deg) scale(1.12,1.17)">/</span></div>
  <div class="ft" id="f4" style="right:6.5px;letter-spacing:.56px">Span 20.0 GHz</div>
</div>

<!-- outer edges -->
<div class="abs" style="left:0;top:0;width:1px;height:731px;background:#fff"></div>
<div class="abs" style="left:1269px;top:1px;width:1px;height:731px;background:#000"></div>
<div class="abs" style="left:1270px;top:0;width:2px;height:731px;background:#fff"></div>
<div class="abs" style="left:0;top:729px;width:1270px;height:1px;background:#000"></div>
<div class="abs" style="left:0;top:730px;width:1272px;height:1px;background:#fff"></div>
</body>
</html>
